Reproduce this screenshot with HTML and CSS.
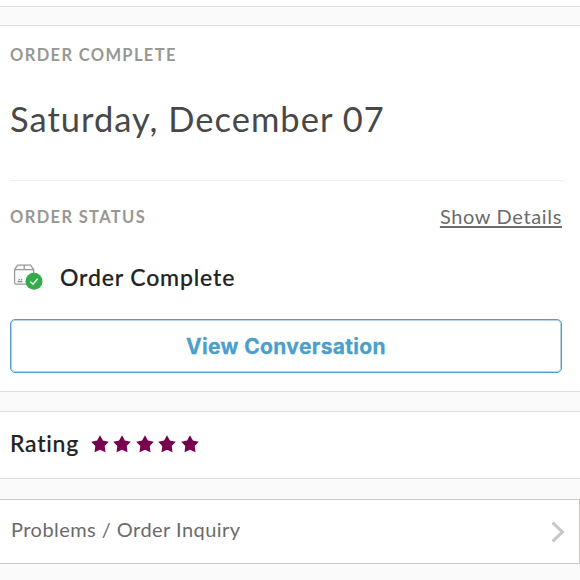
FILE: index.html
```html
<!DOCTYPE html>
<html lang="en">
  <head>
    <meta charset="UTF-8">
    <meta name="viewport" content="width=device-width, initial-scale=1.0">
    <title>Order Complete</title>
    <link rel="stylesheet" href="styles.css">
  </head>
  <body>
    <div class="top-edge"></div>

    <div class="card order">
      <h2 class="label">ORDER COMPLETE</h2>
      <p class="date">Saturday, December 07</p>
      <div class="status-head">
        <h2 class="label">ORDER STATUS</h2>
        <a class="details" href="#">Show Details</a>
      </div>
      <div class="status">
        <svg class="box-icon" width="32" height="28" viewBox="0 0 32 28">
          <path d="M1.6 6.6 4.6 2.2 H17.6 L20.7 6.6 V21.2 H3 Q1.6 21.2 1.6 19.8 Z M1.6 6.6 H20.7 M11.2 2.2 V6.6" fill="none" stroke="#989898" stroke-width="1.3" stroke-linejoin="round"/>
          <path d="M4.4 18.6 h5 M5.4 17.4 l1.4 -1.2 M7.8 17.4 l1.4 -1.2" fill="none" stroke="#888" stroke-width="1.1"/>
          <circle cx="21" cy="18.2" r="8.5" fill="#35ab4b"/>
          <path d="M17.3 18.6 20 21.2 24.7 15.7" fill="none" stroke="#e2f6e4" stroke-width="1.5"/>
        </svg>
        <span class="status-text">Order Complete</span>
      </div>
      <button class="conversation">View Conversation</button>
    </div>

    <div class="card rating">
      <span class="rating-text">Rating</span>
      <div class="stars">
        <svg viewBox="0 0 18 18"><use href="#star"/></svg>
        <svg viewBox="0 0 18 18"><use href="#star"/></svg>
        <svg viewBox="0 0 18 18"><use href="#star"/></svg>
        <svg viewBox="0 0 18 18"><use href="#star"/></svg>
        <svg viewBox="0 0 18 18"><path id="star" d="M9 .2 11.9 5.6 17.8 6.7 13.7 11 14.5 17.2 9 14.7 3.5 17.2 4.3 11 .2 6.7 6.1 5.6Z"/></svg>
      </div>
    </div>

    <a class="inquiry" href="#">
      <span class="inquiry-text">Problems / Order Inquiry</span>
      <svg class="chevron" width="14" height="22" viewBox="0 0 14 22">
        <path d="M1.6 1.6 11.4 11 1.6 20.4" fill="none" stroke="#c6c6c6" stroke-width="3"/>
      </svg>
    </a>
  </body>
</html>
```

FILE: styles.css
```css
* {
    box-sizing: border-box;
}
body {
    margin: 0;
    background-color: #fafafa;
    font-family: Lato, "Liberation Sans", sans-serif;
    color: #222;
    white-space: nowrap;
}
h2, p {
    margin: 0;
}
.top-edge {
    height: 7px;
    background-color: #fefefe;
    border-bottom: 1px solid #dedede;
}
.card {
    margin-top: 18px;
    background-color: #fff;
    border-top: 1px solid #dedede;
    border-bottom: 1px solid #dedede;
}
.order {
    height: 367px;
    padding: 19px 18px 0 10px;
}
.label {
    font-size: 16.5px;
    line-height: 20px;
    font-weight: 700;
    letter-spacing: 1.35px;
    color: #999793;
}
.date {
    margin-top: 32px;
    font-size: 34.5px;
    line-height: 44px;
    letter-spacing: 1.02px;
    color: #484848;
}
.status-head {
    display: flex;
    justify-content: space-between;
    align-items: center;
    height: 72px;
    margin-top: 39px;
    margin-right: -2px;
    padding-right: 2px;
    border-top: 1px solid #efefef;
}
.details {
    padding-bottom: 1px;
    font-size: 20px;
    letter-spacing: 0.65px;
    color: #6b6b6b;
    text-underline-offset: 2px;
}
.status {
    display: flex;
    align-items: center;
    height: 49px;
}
.box-icon {
    margin-left: 3px;
}
.status-text {
    margin-left: 15px;
    font-size: 23px;
    font-weight: 500;
    letter-spacing: 0.85px;
    -webkit-text-stroke: 0.2px #222;
}
.conversation {
    display: block;
    width: 100%;
    height: 54px;
    margin-top: 18px;
    padding: 0;
    background-color: #fff;
    border: 1px solid #4fa0c8;
    border-radius: 5px;
    box-shadow: inset 0 0 0 1px rgba(79, 160, 200, 0.45);
    font-family: Inter, sans-serif;
    font-size: 21px;
    font-weight: 700;
    letter-spacing: 0.35px;
    color: #4a9fcb;
    -webkit-text-stroke: 0.3px #4a9fcb;
}
.rating {
    display: flex;
    align-items: center;
    height: 68px;
    margin-top: 19px;
    padding: 0 0 3px 10px;
}
.rating-text {
    padding-bottom: 2px;
    font-size: 23px;
    font-weight: 500;
    letter-spacing: 0.75px;
    -webkit-text-stroke: 0.2px #222;
}
.stars {
    display: flex;
    gap: 4.5px;
    margin-left: 12px;
}
.stars svg {
    width: 18px;
    height: 18px;
    fill: #77004f;
}
.inquiry {
    display: flex;
    justify-content: space-between;
    align-items: center;
    height: 65px;
    margin-top: 20px;
    padding: 0 14px 0 11px;
    background-color: #fff;
    border: 1px solid #cbc9c8;
    border-left: 0;
    text-decoration: none;
}
.inquiry-text {
    padding-bottom: 5px;
    font-size: 20px;
    letter-spacing: 0.45px;
    color: #6b6b6b;
}
```
